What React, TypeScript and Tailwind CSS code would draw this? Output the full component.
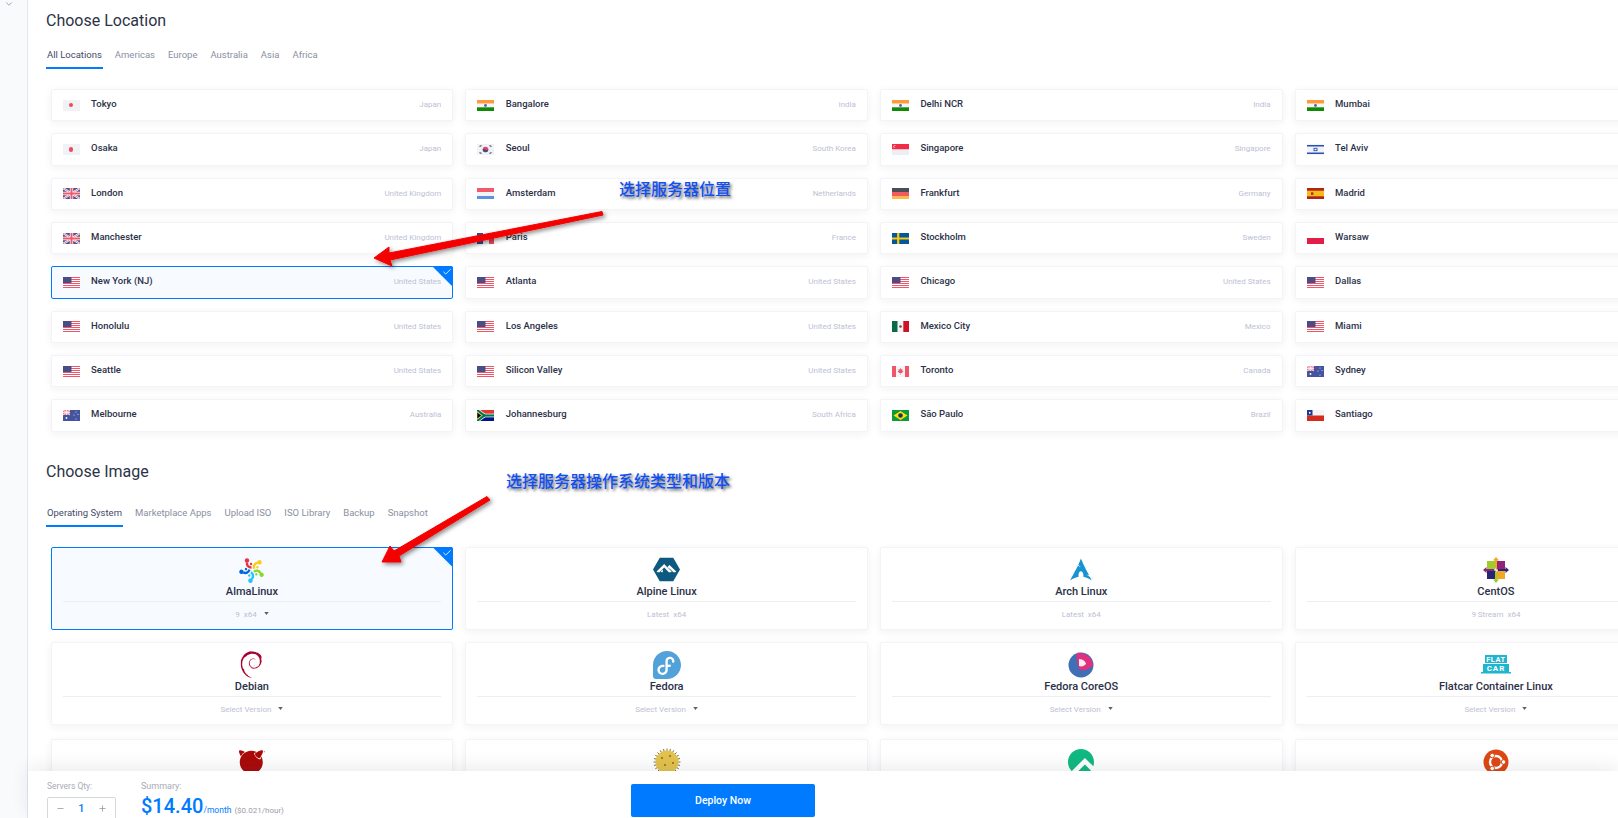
import React from 'react';
import { SiAlpinelinux, SiArchlinux, SiDebian, SiFedora, SiFreebsd, SiRockylinux } from 'react-icons/si';
import { ChevronDown, Check, Minus, Plus } from 'lucide-react';

const UsFlag = () => (
  <svg viewBox="0 0 17 11" className="w-[17px] h-[11px]">
    <rect width="17" height="11" fill="#fff" />
    {[0, 2, 4, 6, 8, 10].map((y) => (
      <rect key={y} y={y} width="17" height="1" fill="#f0566a" />
    ))}
    <rect width="8.5" height="6" fill="#4a4d85" />
  </svg>
);

const GbFlag = () => (
  <svg viewBox="0 0 17 11" className="w-[17px] h-[11px]">
    <rect width="17" height="11" fill="#4a5590" />
    <path d="M0 0 17 11M17 0 0 11" stroke="#fff" strokeWidth="2" />
    <path d="M0 0 17 11M17 0 0 11" stroke="#ee5a6c" strokeWidth="0.8" />
    <path d="M8.5 0v11M0 5.5h17" stroke="#fff" strokeWidth="3.4" />
    <path d="M8.5 0v11M0 5.5h17" stroke="#ee5a6c" strokeWidth="2" />
  </svg>
);

const AuFlag = () => (
  <svg viewBox="0 0 17 11" className="w-[17px] h-[11px]">
    <rect width="17" height="11" fill="#45549f" />
    <rect width="7" height="5" fill="#e9899b" />
    <path d="M0 0 7 5M7 0 0 5M3.5 0v5M0 2.5h7" stroke="#fff" strokeWidth="0.7" />
    <circle cx="3.5" cy="8" r="0.9" fill="#fff" />
    <circle cx="13" cy="2" r="0.5" fill="#fff" />
    <circle cx="15" cy="4.5" r="0.5" fill="#fff" />
    <circle cx="11" cy="5" r="0.5" fill="#fff" />
    <circle cx="13" cy="9" r="0.5" fill="#fff" />
  </svg>
);

const Stripes = ({ colors }: { colors: string[] }) => (
  <div className="w-[17px] h-[11px] flex flex-col">
    {colors.map((c, i) => (
      <div key={i} className="flex-1" style={{ backgroundColor: c }} />
    ))}
  </div>
);

const Flag = ({ code }: { code: string }) => {
  switch (code) {
    case 'us':
      return <UsFlag />;
    case 'gb':
      return <GbFlag />;
    case 'au':
      return <AuFlag />;
    case 'jp':
      return (
        <div className="w-[17px] h-[11px] bg-[#f1f2f6] flex items-center justify-center">
          <div className="w-[4.5px] h-[4.5px] rounded-full bg-[#f4475c]" />
        </div>
      );
    case 'in':
      return (
        <svg viewBox="0 0 17 11" className="w-[17px] h-[11px]">
          <rect width="17" height="3.7" fill="#ff9a3c" />
          <rect y="3.7" width="17" height="3.6" fill="#f4f5f8" />
          <rect y="7.3" width="17" height="3.7" fill="#128807" />
          <circle cx="8.5" cy="5.5" r="1.4" fill="#5a5f9e" />
        </svg>
      );
    case 'kr':
      return (
        <svg viewBox="0 0 17 11" className="w-[17px] h-[11px]">
          <rect width="17" height="11" fill="#f1f2f6" />
          <circle cx="8.5" cy="5.5" r="2.8" fill="#ef4458" />
          <path d="M5.7 5.5a2.8 2.8 0 0 0 5.6 0c-1 1-1.8 0-2.8 0s-1.8-1-2.8 0z" fill="#3b4c9a" />
          <path d="M2.5 2.5 4.5 1.5M2.5 8.5l2 1M12.5 1.5l2 1M12.5 9.5l2-1" stroke="#555" strokeWidth="1.2" />
        </svg>
      );
    case 'sg':
      return (
        <svg viewBox="0 0 17 11" className="w-[17px] h-[11px]">
          <rect width="17" height="5.5" fill="#f02d45" />
          <rect y="5.5" width="17" height="5.5" fill="#eceef3" />
          <circle cx="2.8" cy="2.7" r="1.4" fill="#fff" />
          <circle cx="3.4" cy="2.7" r="1.3" fill="#f02d45" />
        </svg>
      );
    case 'il':
      return (
        <svg viewBox="0 0 17 11" className="w-[17px] h-[11px]">
          <rect width="17" height="11" fill="#f1f3f9" />
          <rect y="1" width="17" height="1.5" fill="#2a50b8" />
          <rect y="8.5" width="17" height="1.5" fill="#2a50b8" />
          <rect x="7" y="4.3" width="3" height="2.4" fill="none" stroke="#2a50b8" strokeWidth="0.9" />
        </svg>
      );
    case 'nl':
      return <Stripes colors={['#f05a6c', '#f3f4f8', '#5b93e0']} />;
    case 'de':
      return <Stripes colors={['#4a4f57', '#f25c5f', '#fdbb4b']} />;
    case 'es':
      return (
        <svg viewBox="0 0 17 11" className="w-[17px] h-[11px]">
          <rect width="17" height="11" fill="#b5211c" />
          <rect y="2.7" width="17" height="5.6" fill="#f5bb19" />
          <rect x="4" y="4.3" width="2.4" height="2.6" fill="#a8301f" />
        </svg>
      );
    case 'fr':
      return (
        <div className="w-[17px] h-[11px] flex">
          <div className="flex-1 bg-[#3d4a94]" />
          <div className="flex-1 bg-[#f3f4f8]" />
          <div className="flex-1 bg-[#ef4a5c]" />
        </div>
      );
    case 'se':
      return (
        <svg viewBox="0 0 17 11" className="w-[17px] h-[11px]">
          <rect width="17" height="11" fill="#02589b" />
          <path d="M6.2 0v11M0 5.5h17" stroke="#fcc70d" strokeWidth="2.2" />
        </svg>
      );
    case 'pl':
      return <Stripes colors={['#ffffff', '#e11d48']} />;
    case 'mx':
      return (
        <svg viewBox="0 0 17 11" className="w-[17px] h-[11px]">
          <rect width="5.7" height="11" fill="#0a6a46" />
          <rect x="5.7" width="5.6" height="11" fill="#f2f3f6" />
          <rect x="11.3" width="5.7" height="11" fill="#cf1126" />
          <circle cx="8.5" cy="5.5" r="1.3" fill="#6b4a2a" />
        </svg>
      );
    case 'ca':
      return (
        <svg viewBox="0 0 17 11" className="w-[17px] h-[11px]">
          <rect width="17" height="11" fill="#f4f4f7" />
          <rect width="4" height="11" fill="#f0566a" />
          <rect x="13" width="4" height="11" fill="#f0566a" />
          <path d="M8.5 2 9.4 3.6 10.6 3.2 10.3 5 11.5 5.3 9.9 7H8.8V8.5H8.2V7H7.1L5.5 5.3 6.7 5 6.4 3.2 7.6 3.6z" fill="#f0566a" />
        </svg>
      );
    case 'za':
      return (
        <svg viewBox="0 0 17 11" className="w-[17px] h-[11px]">
          <rect width="17" height="5.5" fill="#e03c31" />
          <rect y="5.5" width="17" height="5.5" fill="#001489" />
          <path d="M0 0 7.5 5.5 0 11" fill="none" stroke="#fff" strokeWidth="3.6" />
          <path d="M7 5.5H17" stroke="#fff" strokeWidth="3.6" />
          <path d="M0 0 7.5 5.5 0 11" fill="none" stroke="#007749" strokeWidth="2.2" />
          <path d="M7 5.5H17" stroke="#007749" strokeWidth="2.2" />
          <path d="M0 2 4.6 5.5 0 9z" fill="#000" stroke="#ffb81c" strokeWidth="0.7" />
        </svg>
      );
    case 'br':
      return (
        <svg viewBox="0 0 17 11" className="w-[17px] h-[11px]">
          <rect width="17" height="11" fill="#0b9a3c" />
          <path d="M8.5 1 15.5 5.5 8.5 10 1.5 5.5z" fill="#fedf00" />
          <circle cx="8.5" cy="5.5" r="2.3" fill="#17307a" />
        </svg>
      );
    case 'cl':
      return (
        <svg viewBox="0 0 17 11" className="w-[17px] h-[11px]">
          <rect width="17" height="5.5" fill="#f3f4f7" />
          <rect y="5.5" width="17" height="5.5" fill="#d52b1e" />
          <rect width="5.5" height="5.5" fill="#1a3a8c" />
          <circle cx="2.75" cy="2.75" r="0.9" fill="#fff" />
        </svg>
      );
    default:
      return null;
  }
};

const locations = [
  ['Tokyo', 'Japan', 'jp'],
  ['Bangalore', 'India', 'in'],
  ['Delhi NCR', 'India', 'in'],
  ['Mumbai', 'India', 'in'],
  ['Osaka', 'Japan', 'jp'],
  ['Seoul', 'South Korea', 'kr'],
  ['Singapore', 'Singapore', 'sg'],
  ['Tel Aviv', 'Israel', 'il'],
  ['London', 'United Kingdom', 'gb'],
  ['Amsterdam', 'Netherlands', 'nl'],
  ['Frankfurt', 'Germany', 'de'],
  ['Madrid', 'Spain', 'es'],
  ['Manchester', 'United Kingdom', 'gb'],
  ['Paris', 'France', 'fr'],
  ['Stockholm', 'Sweden', 'se'],
  ['Warsaw', 'Poland', 'pl'],
  ['New York (NJ)', 'United States', 'us'],
  ['Atlanta', 'United States', 'us'],
  ['Chicago', 'United States', 'us'],
  ['Dallas', 'United States', 'us'],
  ['Honolulu', 'United States', 'us'],
  ['Los Angeles', 'United States', 'us'],
  ['Mexico City', 'Mexico', 'mx'],
  ['Miami', 'United States', 'us'],
  ['Seattle', 'United States', 'us'],
  ['Silicon Valley', 'United States', 'us'],
  ['Toronto', 'Canada', 'ca'],
  ['Sydney', 'Australia', 'au'],
  ['Melbourne', 'Australia', 'au'],
  ['Johannesburg', 'South Africa', 'za'],
  ['São Paulo', 'Brazil', 'br'],
  ['Santiago', 'Chile', 'cl'],
];

const AlmaLogo = () => (
  <svg viewBox="0 0 26 26" className="w-[26px] h-[26px]">
    {['#e8343f', '#ffcb12', '#86da2f', '#24c2ff', '#0069da'].map((c, i) => (
      <g key={c} transform={`rotate(${i * 72} 13 13)`}>
        <path d="M12.500 10.500C9.500 10.500 7.500 8.500 8 5.500" fill="none" stroke={c} strokeWidth="2.400" />
        <circle cx="8" cy="3.500" r="2.200" fill={c} />
        <circle cx="12" cy="7" r="1.200" fill={c} />
      </g>
    ))}
  </svg>
);

const CentosLogo = () => (
  <svg viewBox="0 0 26 26" className="w-[26px] h-[26px]">
    <rect x="4" y="4" width="8.500" height="8.500" fill="#9ccd2a" />
    <rect x="13.500" y="4" width="8.500" height="8.500" fill="#932279" />
    <rect x="4" y="13.500" width="8.500" height="8.500" fill="#262577" />
    <rect x="13.500" y="13.500" width="8.500" height="8.500" fill="#efa724" />
    <path d="M13 0 16 3.500H14V11H12V3.500H10z" fill="#efa724" />
    <path d="M26 13 22.500 16V14H15V12H22.500V10z" fill="#262577" />
    <path d="M13 26 10 22.500H12V15H14V22.500H16z" fill="#9ccd2a" />
    <path d="M0 13 3.500 10V12H11V14H3.500V16z" fill="#932279" />
  </svg>
);

const CoreosLogo = () => (
  <svg viewBox="0 0 26 26" className="w-[26px] h-[26px]">
    <circle cx="13" cy="13" r="12.500" fill="#3f6fb5" />
    <path d="M9 1C16 0 25 5 25 14C20 17 16 20 11 17C9 12 8 6 9 1Z" fill="#e0307f" />
    <path d="M11 7C15 7 18 10 18 12C16 14 14 15 11 14Z" fill="#fdeef4" />
  </svg>
);

const FlatcarLogo = () => (
  <svg viewBox="0 0 30 20" className="w-[30px] h-[20px]">
    <rect x="4" y="0" width="22" height="8" fill="#1fb5cf" />
    <rect x="2" y="9" width="26" height="8.500" fill="#1fb5cf" />
    <rect x="0" y="17" width="30" height="1.500" fill="#1fb5cf" />
    <text x="15" y="7" textAnchor="middle" fontSize="7.500" fontWeight="700" fill="#fff" letterSpacing="0.500" fontFamily="Roboto, sans-serif">FLAT</text>
    <text x="15" y="16.200" textAnchor="middle" fontSize="8" fontWeight="700" fill="#fff" letterSpacing="1" fontFamily="Roboto, sans-serif">CAR</text>
  </svg>
);

const OpenbsdLogo = () => (
  <svg viewBox="0 0 30 30" className="w-[30px] h-[30px]">
    {Array.from({ length: 24 }).map((_, i) => (
      <path key={i} d="M15 1.500V5" stroke="#6b5a2a" strokeWidth="0.800" transform={`rotate(${i * 15} 15 15)`} />
    ))}
    <circle cx="15" cy="15" r="11.500" fill="#e3c24e" />
    <circle cx="10" cy="11" r="1" fill="#8a6d1e" />
    <circle cx="18" cy="9" r="1" fill="#8a6d1e" />
    <circle cx="21" cy="16" r="1" fill="#8a6d1e" />
    <circle cx="13" cy="18" r="1" fill="#8a6d1e" />
  </svg>
);

const UbuntuLogo = () => (
  <svg viewBox="0 0 26 26" className="w-[26px] h-[26px]">
    <circle cx="13" cy="13" r="12.500" fill="#dd4814" />
    <circle cx="13" cy="13" r="6" fill="none" stroke="#fff" strokeWidth="2.400" />
    <circle cx="20.500" cy="13" r="2.300" fill="#fff" stroke="#dd4814" />
    <circle cx="9.200" cy="6.500" r="2.300" fill="#fff" stroke="#dd4814" />
    <circle cx="9.200" cy="19.500" r="2.300" fill="#fff" stroke="#dd4814" />
  </svg>
);

const images = [
  { name: 'AlmaLinux', version: '9  x64', logo: <AlmaLogo />, selected: true, caret: true },
  { name: 'Alpine Linux', version: 'Latest  x64', logo: <SiAlpinelinux className="text-[27px] text-[#0d597f]" /> },
  { name: 'Arch Linux', version: 'Latest  x64', logo: <SiArchlinux className="text-[23px] text-[#1793d1]" /> },
  { name: 'CentOS', version: '9 Stream  x64', logo: <CentosLogo /> },
  { name: 'Debian', version: 'Select Version', logo: <SiDebian className="text-[27px] text-[#a80030]" />, caret: true },
  { name: 'Fedora', version: 'Select Version', logo: <SiFedora className="text-[28px] text-[#51a2da]" />, caret: true },
  { name: 'Fedora CoreOS', version: 'Select Version', logo: <CoreosLogo />, caret: true },
  { name: 'Flatcar Container Linux', version: 'Select Version', logo: <FlatcarLogo />, caret: true },
  { name: 'FreeBSD', version: 'Select Version', logo: <SiFreebsd className="text-[26px] text-[#ab0a0a]" />, caret: true },
  { name: 'OpenBSD', version: 'Select Version', logo: <OpenbsdLogo />, caret: true },
  { name: 'Rocky Linux', version: 'Select Version', logo: <SiRockylinux className="text-[26px] text-[#10b981]" />, caret: true },
  { name: 'Ubuntu', version: 'Select Version', logo: <UbuntuLogo />, caret: true },
];

const Corner = () => (
  <div className="absolute -top-px -right-px w-[21px] h-[21px] [clip-path:polygon(0_0,100%_0,100%_100%)] bg-[#007bff] rounded-tr-[2px]">
    <Check className="absolute top-[1px] right-[1px] w-[10px] h-[10px] text-white" strokeWidth={2} />
  </div>
);

const Tabs = ({ items }: { items: string[] }) => (
  <div className="flex gap-[11px] h-[29px] text-[9.5px] text-[#8a8f9f]">
    {items.map((t, i) => (
      <div key={t} className={`px-[1px] pt-[7px] leading-[15px] ${i === 0 ? 'border-b-2 border-[#007bff] text-[#454a68]' : ''}`}>
        {t}
      </div>
    ))}
  </div>
);

const LocationCard = ({ name, country, code, selected }: { name: string; country: string; code: string; selected?: boolean }) => (
  <div
    className={`relative h-[32.33px] rounded-[2px] flex items-center pl-[11px] pr-[11px] border ${
      selected ? 'border-[#007bff] bg-[#f7faff]' : 'border-[#f3f4f7] bg-white shadow-[0_2px_8px_rgba(30,40,70,0.06)]'
    }`}
  >
    <div className="w-[28.500px] shrink-0">
      <Flag code={code} />
    </div>
    <div className="text-[9.5px] font-medium text-[#2c3148] -mt-[2px]">{name}</div>
    <div className="ml-auto text-[8px] text-[#bcc1d4]">{country}</div>
    {selected && <Corner />}
  </div>
);

const ImageCard = ({ name, version, logo, selected, caret, lastRow }: { name: string; version: string; logo: React.ReactNode; selected?: boolean; caret?: boolean; lastRow?: boolean }) => (
  <div
    className={`relative h-[83px] rounded-[2px] flex flex-col items-center px-[11px] pt-[8px] border ${lastRow ? 'mt-[2px]' : ''} ${
      selected ? 'border-[#007bff] bg-[#f7faff]' : 'border-[#f3f4f7] bg-white shadow-[0_2px_8px_rgba(30,40,70,0.06)]'
    }`}
  >
    <div className="h-[28px] flex items-center justify-center">{logo}</div>
    <div className="h-[16px] leading-[16px] text-[11px] font-medium text-[#2c3148]">{name}</div>
    <div className="w-full mt-[1px] border-t border-[#eceef2]" />
    <div className="h-[26px] flex items-center gap-[7px] text-[8px] text-[#bcc1d4] whitespace-pre">
      {version}
      {caret && (
        <svg viewBox="0 0 6 4" className="w-[5px] h-[3px] -mt-[2px]">
          <path d="M0 0H6L3 4Z" fill="#5a5f72" />
        </svg>
      )}
    </div>
    {selected && <Corner />}
  </div>
);

export default function App() {
  return (
    <div className="relative w-[1618px] h-[818px] overflow-hidden flex bg-white font-['Roboto',sans-serif]">
      <div className="w-[28px] shrink-0 bg-[#f8fafc] border-r border-[#e3e6ea] flex justify-center pr-[9px]">
        <ChevronDown className="w-[10px] h-[10px] text-[#8d93a1] -mt-[1px]" />
      </div>

      <div className="flex-1 min-w-0 flex flex-col">
        {/* scroll area stops where the deploy bar starts */}
        <div className="flex-1 min-h-0 overflow-hidden pl-[18px] pt-[11px]">
          <h2 className="text-[16px] leading-[19px] text-[#2c3345]">Choose Location</h2>
          <div className="mt-[10px]">
            <Tabs items={['All Locations', 'Americas', 'Europe', 'Australia', 'Asia', 'Africa']} />
          </div>
          <div className="mt-[20px] ml-[4.6px] grid grid-cols-[repeat(4,402.67px)] gap-x-3 gap-y-3">
            {locations.map(([name, country, code]) => (
              <LocationCard key={name} name={name} country={country} code={code} selected={name === 'New York (NJ)'} />
            ))}
          </div>

          <h2 className="mt-[30px] text-[16px] leading-[19px] text-[#2c3345]">Choose Image</h2>
          <div className="mt-[17px]">
            <Tabs items={['Operating System', 'Marketplace Apps', 'Upload ISO', 'ISO Library', 'Backup', 'Snapshot']} />
          </div>
          <div className="mt-[20px] ml-[4.6px] grid grid-cols-[repeat(4,402.67px)] gap-x-3 gap-y-3">
            {images.map((img, i) => (
              <ImageCard key={img.name} {...img} lastRow={i >= 8} />
            ))}
          </div>
        </div>

        {/* bottom deploy bar */}
        <div className="relative h-[47px] shrink-0 bg-white shadow-[0_-4px_18px_rgba(30,40,70,0.09)] flex pl-[19px]">
          <div className="pt-[9px] w-[94px]">
            <div className="text-[8.5px] leading-[12px] text-[#a9acb5]">Servers Qty:</div>
            <div className="mt-[5px] w-[69px] h-[30px] border border-[#d6d8de] rounded-[2px] flex items-start justify-between px-[8px] pt-[3px] text-[#8d93a1]">
              <Minus className="w-[9px] h-[9px] mt-[3px]" />
              <span className="text-[11px] leading-[15px] font-medium text-[#007bff]">1</span>
              <Plus className="w-[9px] h-[9px] mt-[3px]" />
            </div>
          </div>
          <div className="pt-[9px]">
            <div className="text-[9px] leading-[12px] text-[#a9acb5]">Summary:</div>
            <div className="flex items-baseline leading-[24px] mt-[2px]">
              <span className="text-[20px] font-medium text-[#007bff]">$14.40</span>
              <span className="text-[8.5px] text-[#007bff]">/month</span>
              <span className="ml-[3px] text-[8px] text-[#9a9ea9]">($0.021/hour)</span>
            </div>
          </div>
          <button className="absolute left-[603px] top-[13px] w-[184px] h-[33px] rounded-[2px] bg-[#007bff] text-white text-[10.5px] font-medium">
            Deploy Now
          </button>
        </div>
      </div>

      {/* screenshot annotations */}
      <div className="absolute left-[619px] top-[177px] text-[16px] leading-[22px] font-medium text-[#0f4ff5] font-['Noto_Sans_CJK_SC',sans-serif] [text-shadow:2px_2px_3px_rgba(0,0,0,0.6)]">
        选择服务器位置
      </div>
      <div className="absolute left-[506px] top-[469px] text-[16px] leading-[22px] font-medium text-[#0f4ff5] font-['Noto_Sans_CJK_SC',sans-serif] [text-shadow:2px_2px_3px_rgba(0,0,0,0.6)]">
        选择服务器操作系统类型和版本
      </div>
      <svg className="absolute left-0 top-0 pointer-events-none" width="1618" height="818">
        <defs>
          <filter id="arrow-shadow" x="-20%" y="-20%" width="140%" height="140%">
            <feDropShadow dx="2" dy="2" stdDeviation="2" floodColor="#000" floodOpacity="0.45" />
          </filter>
        </defs>
        <g filter="url(#arrow-shadow)" fill="#f50000" stroke="#f50000" strokeLinejoin="round" strokeWidth="1">
          <path d="M602 211.500 603 215 390 260 392 266 374 258 389 247 389 253z" />
          <path d="M487 496.500 490 500 399 556 401 562 382 562 390 546 394 551z" />
        </g>
      </svg>
    </div>
  );
}
